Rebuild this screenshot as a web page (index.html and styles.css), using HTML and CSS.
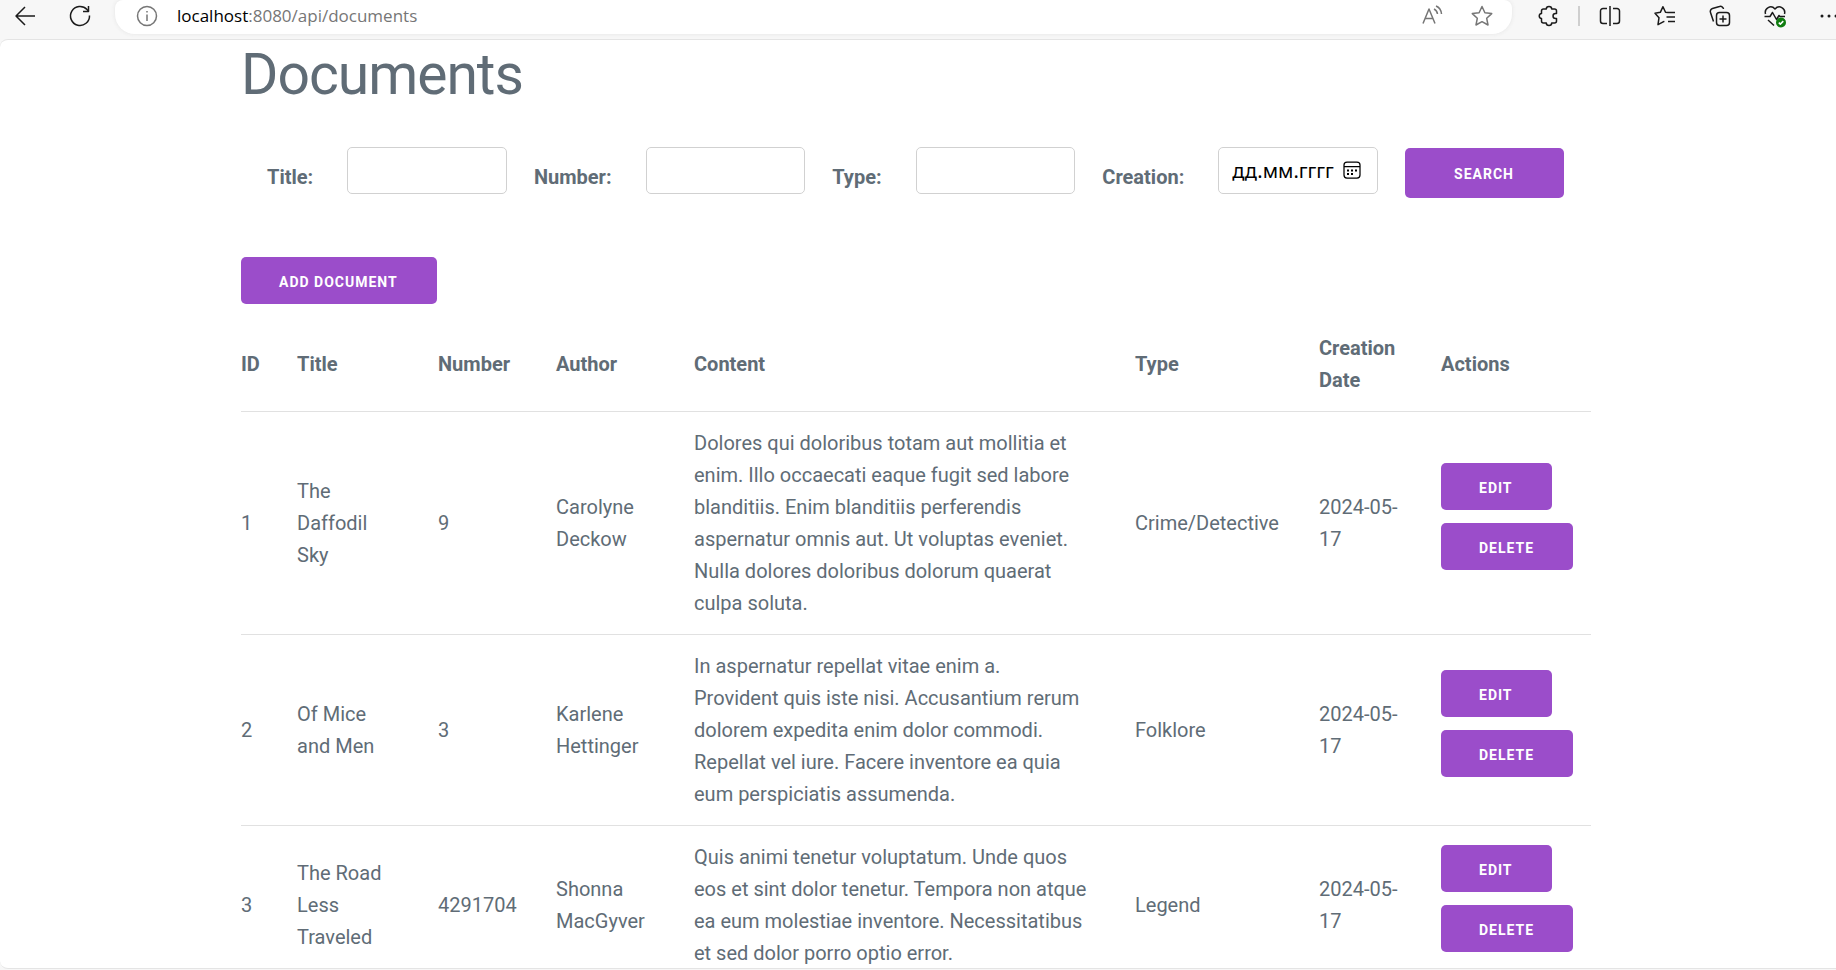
FILE: index.html
```html
<!DOCTYPE html>
<html lang="en">
<head>
<meta charset="utf-8">
<title>Documents</title>
<link rel="stylesheet" href="styles.css">
</head>
<body>
<header class="toolbar">
  <button class="tool" type="button" aria-label="Back"><svg viewBox="0 0 24 24"><path d="M22 12H3M12 3l-9 9 9 9"/></svg></button>
  <button class="tool" type="button" aria-label="Refresh"><svg viewBox="0 0 24 24"><path d="M21.500 11.500a9.500 9.500 0 1 1-2.500-6l2 2M20.500 2v5.500h-5.500"/></svg></button>
  <div class="address">
    <button class="tool muted" type="button" aria-label="Site information"><svg viewBox="0 0 24 24"><circle cx="12" cy="12" r="9.500"/><path d="M12 10.500v6.500M12 7v1.600"/></svg></button>
    <span class="url"><span class="host">localhost</span>:8080/api/documents</span>
    <button class="tool muted" type="button" aria-label="Read aloud"><svg viewBox="0 0 24 24"><path d="M3 19.500L9 5l6 14.500M5 14.500h8M14 5q3 1.500 3.500 5M16 2q5 2 5.500 8"/></svg></button>
    <button class="tool muted" type="button" aria-label="Add to favourites"><svg viewBox="0 0 24 24"><path d="M12 2.500l2.900 6.200 6.800.9-5 4.700 1.300 6.700-6-3.300-6 3.300 1.300-6.700-5-4.700 6.800-.9z"/></svg></button>
  </div>
  <div class="tools">
    <button class="tool" type="button" aria-label="Extensions"><svg viewBox="0 0 24 24"><path d="M7.500 5h2.800c0-3.300 5.400-3.300 5.400 0H18.500a2 2 0 0 1 2 2v2.500h-1c-3.300 0-3.300 5 0 5h1V17a2 2 0 0 1-2 2H15.700c0 3.300-5.400 3.300-5.400 0H7.500a2 2 0 0 1-2-2v-2.500c-3-.3-3-4.700 0-5V7a2 2 0 0 1 2-2z"/></svg></button>
    <span class="divider"></span>
    <button class="tool" type="button" aria-label="Split screen"><svg viewBox="0 0 24 24"><path d="M12 2v20M9 4.500H5a2.500 2.500 0 0 0-2.500 2.500v10A2.500 2.500 0 0 0 5 19.500h4M15 4.500h4a2.500 2.500 0 0 1 2.500 2.500v10a2.500 2.500 0 0 1-2.500 2.500h-4"/></svg></button>
    <button class="tool" type="button" aria-label="Favourites"><svg viewBox="0 0 24 24"><path d="M15 8.500l-2.500-.2L10 2.700 7.300 8.300l-5.300.9 4 4.500-1 7 5.200-2.900 1.200-.4M14.500 8.500H22M13.500 13H22M15 17.500h7"/></svg></button>
    <button class="tool" type="button" aria-label="Collections"><svg viewBox="0 0 24 24"><rect x="8.500" y="8.500" width="13" height="13" rx="3"/><path d="M15 11.500v7M11.500 15h7M5.500 17.500l-3-9a3 3 0 0 1 2-4l7-2a3 3 0 0 1 4 2.500"/></svg></button>
    <button class="tool" type="button" aria-label="Browser essentials"><svg viewBox="0 0 24 24"><path d="M2.500 10C1 4 8 .5 12 5c4-4.500 11-1 9.500 5M1.500 12.500H7l2.500-4 4 7 2.500-4 1 1h5M5 16l6 5.500"/><circle class="ok" cx="18" cy="18.500" r="5"/><path class="tick" d="M15.800 18.600l1.500 1.500 3-3"/></svg></button>
    <button class="tool" type="button" aria-label="More"><svg viewBox="0 0 24 24"><path class="dots" d="M4 12h.01M11 12h.01M18 12h.01"/></svg></button>
  </div>
</header>
<main class="page">
  <div class="container">
    <h1>Documents</h1>
    <form class="search">
      <div class="field"><label for="title">Title:</label><input id="title" type="text"></div>
      <div class="field"><label for="number">Number:</label><input id="number" type="text"></div>
      <div class="field"><label for="type">Type:</label><input id="type" type="text"></div>
      <div class="field"><label for="creation">Creation:</label>
        <div class="date"><input id="creation" type="text" placeholder="дд.мм.гггг"><button class="picker" type="button" aria-label="Choose date"><svg viewBox="0 0 20 20"><rect x="2" y="2" width="16" height="16" rx="3"/><path d="M2 6.500h16"/><path class="days" d="M6 10.500h.01M10 10.500h.01M14 10.500h.01M6 14h.01M10 14h.01"/></svg></button></div>
      </div>
      <button class="button submit" type="submit">Search</button>
    </form>
    <button class="button" type="button">Add document</button>
    <table>
      <colgroup><col class="c-id"><col class="c-title"><col class="c-number"><col class="c-author"><col class="c-content"><col class="c-type"><col class="c-date"><col class="c-actions"></colgroup>
      <thead><tr><th>ID</th><th>Title</th><th>Number</th><th>Author</th><th>Content</th><th>Type</th><th>Creation Date</th><th>Actions</th></tr></thead>
      <tbody>
        <tr><td>1</td><td>The Daffodil Sky</td><td>9</td><td>Carolyne Deckow</td><td class="content">Dolores qui doloribus totam aut mollitia et enim. Illo occaecati eaque fugit sed labore blanditiis. Enim blanditiis perferendis aspernatur omnis aut. Ut voluptas eveniet. Nulla dolores doloribus dolorum quaerat culpa soluta.</td><td>Crime/Detective</td><td>2024-05-17</td><td><div class="actions"><button class="button" type="button">Edit</button><button class="button" type="button">Delete</button></div></td></tr>
        <tr><td>2</td><td>Of Mice and Men</td><td>3</td><td>Karlene Hettinger</td><td class="content">In aspernatur repellat vitae enim a.<br>Provident quis iste nisi. Accusantium rerum dolorem expedita enim dolor commodi. Repellat vel iure. Facere inventore ea quia eum perspiciatis assumenda.</td><td>Folklore</td><td>2024-05-17</td><td><div class="actions"><button class="button" type="button">Edit</button><button class="button" type="button">Delete</button></div></td></tr>
        <tr><td>3</td><td>The Road Less Traveled</td><td>4291704</td><td>Shonna MacGyver</td><td class="content">Quis animi tenetur voluptatum. Unde quos eos et sint dolor tenetur. Tempora non atque ea eum molestiae inventore. Necessitatibus et sed dolor porro optio error.</td><td>Legend</td><td>2024-05-17</td><td><div class="actions"><button class="button" type="button">Edit</button><button class="button" type="button">Delete</button></div></td></tr>
      </tbody>
    </table>
  </div>
</main>
</body>
</html>
```
FILE: styles.css
```css
* { box-sizing: border-box; }

body {
  margin: 0;
  height: 100vh;
  display: flex;
  flex-direction: column;
  overflow: hidden;
  background: #f7f7f7;
  color: #606c76;
  font: 400 20px/32px Roboto, sans-serif;
}

button { font: inherit; cursor: pointer; }

/* Browser toolbar */
.toolbar {
  flex: none;
  height: 39px;
  padding-left: 13px;
  display: flex;
  align-items: flex-start;
}

.tool {
  flex: none;
  width: 24px;
  height: 32px;
  padding: 0;
  border: 0;
  background: none;
  color: #1b1b1b;
}
.tool + .tool { margin-left: 31px; }
.tool svg { display: block; width: 24px; height: 24px; }
.tool path, .tool circle, .tool rect {
  fill: none;
  stroke: currentColor;
  stroke-width: 1.5;
  stroke-linejoin: round;
}
.muted { color: #767676; }
.tool .ok { fill: #107c10; stroke: none; }
.tool .tick { stroke: #fff; }
.tool .dots { stroke-width: 3; stroke-linecap: round; }

.address {
  flex: 1;
  height: 34px;
  margin-left: 23px;
  padding: 0 18px 0 20px;
  display: flex;
  background: #fff;
  border-radius: 8px 8px 20px 20px;
  box-shadow: 0 0 4px #e4e4e4;
}
.address .tool + .tool { margin-left: 26px; }
.url {
  flex: 1;
  margin-left: 18px;
  color: #767676;
  font: 17px/32px "Open Sans", sans-serif;
}
.host { color: #000; }

.tools {
  display: flex;
  gap: 31px;
  padding-left: 24px;
  margin-right: -6px;
}
.tools .tool + .tool { margin-left: 0; }
.divider { width: 2px; height: 20px; margin: 6px -13px 0 -13px; background: #cfcfcf; }

/* Page */
.page {
  flex: 1;
  min-height: 0;
  overflow: hidden;
  margin-bottom: 1px;
  padding-right: 4px;
  background: #fff;
  border: solid #e4e4e4;
  border-width: 1px 0;
  border-radius: 8px 0 0 8px;
}
.container {
  max-width: 1400px;
  margin: 0 auto;
  padding: 0 25px;
}

h1 {
  margin: 0 0 37px;
  font-size: 57px;
  line-height: 70px;
  font-weight: 400;
  letter-spacing: -1px;
}

.search {
  display: flex;
  gap: 27px;
  margin: 0 27px 59px 26px;
  align-items: flex-start;
}
.field { display: flex; flex: auto; gap: 34px; }
label { padding-top: 14px; font-weight: 700; }
input {
  flex: 1;
  width: 159px;
  min-width: 0;
  height: 47px;
  padding: 0 13px;
  border: 1px solid #d1d1d1;
  border-radius: 5px;
  background: #fff;
  color: #000;
  font: 20px/32px "Noto Sans", sans-serif;
}
input::placeholder { color: #000; opacity: 1; }
.date { flex: 1; display: flex; position: relative; }
.picker {
  position: absolute;
  top: 13px;
  right: 16px;
  width: 20px;
  height: 20px;
  padding: 0;
  border: 0;
  background: none;
}
.picker svg { display: block; }
.picker path, .picker rect { fill: none; stroke: #000; stroke-width: 1.25; }
.picker .days { stroke-width: 2; stroke-linecap: square; }

.button {
  height: 47px;
  padding: 2px 39px 0 38px;
  border: 0;
  border-radius: 5px;
  background: #9b4dca;
  color: #fff;
  font-size: 14px;
  line-height: 24px;
  font-weight: 700;
  letter-spacing: 1px;
  text-transform: uppercase;
  white-space: nowrap;
  display: block;
}
.submit { flex: none; width: 159px; height: 50px; margin-top: 1px; }

table {
  width: 100%;
  margin-top: 13px;
  table-layout: fixed;
  border-collapse: separate;
  border-spacing: 0;
}
.c-id { width: 37px; }
.c-title { width: 141px; }
.c-number { width: 118px; }
.c-author { width: 138px; }
.c-content { width: 441px; }
.c-type { width: 184px; }
.c-date { width: 122px; }
.c-actions { width: 169px; }
th, td {
  padding: 15px 19px;
  border-bottom: 1px solid #e1e1e1;
  text-align: left;
  vertical-align: middle;
}
th { font-weight: 700; }
th:first-child, td:first-child { padding-left: 0; padding-right: 0; }
th:last-child, td:last-child { padding-right: 0; }
td:last-child { padding-top: 0; padding-bottom: 0; }
.content { padding-right: 23px; }
.actions {
  display: flex;
  flex-direction: column;
  align-items: flex-start;
  gap: 13px;
  padding-bottom: 13px;
}
```
